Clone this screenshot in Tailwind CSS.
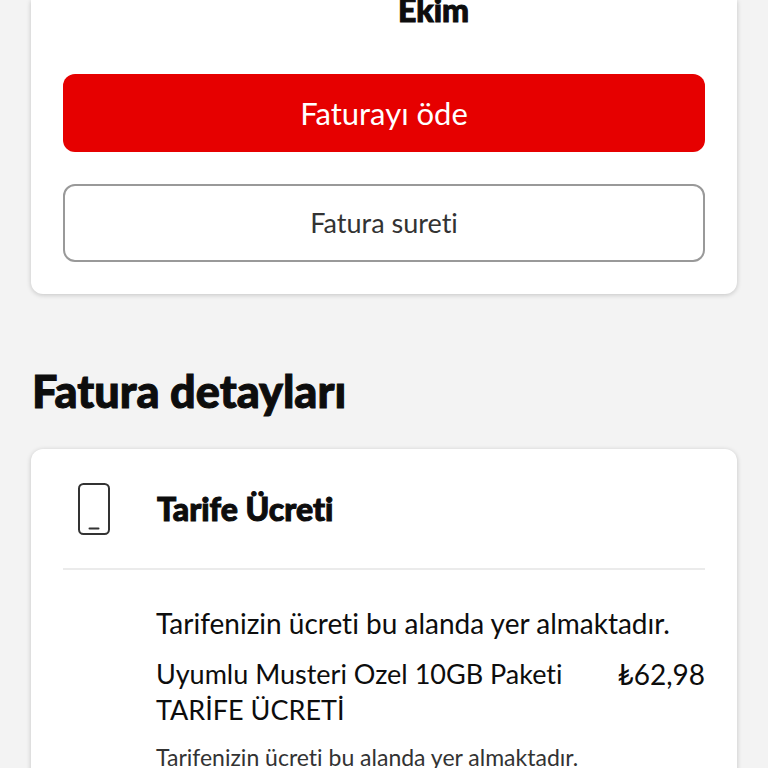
<!DOCTYPE html>
<html lang="tr">
<head>
  <meta charset="UTF-8">
  <meta name="viewport" content="width=device-width, initial-scale=1.0">
  <title>Fatura detayları</title>
  <script src="https://cdn.jsdelivr.net/npm/@tailwindcss/browser@4"></script>
</head>
<body class="h-screen overflow-hidden bg-[#f3f3f3] px-[31px] font-['Lato','Noto_Sans',sans-serif] text-[#0d0d0d] [font-variant-ligatures:none]">

  <!-- Bill summary -->
  <section class="rounded-b-xl bg-white px-8 pb-8 shadow-[0_1px_5px_rgba(0,0,0,0.2)]">
    <div class="grid grid-cols-2 gap-7 pb-[42px]">
      <p class="col-start-2 h-8 text-[32px] leading-5 font-black [-webkit-text-stroke:1px]">Ekim</p>
    </div>
    <div class="flex flex-col gap-8">
      <button type="button" class="h-[78px] w-full rounded-xl bg-[#e60000] text-[31px] text-white">Faturayı öde</button>
      <button type="button" class="h-[78px] w-full rounded-xl border-2 border-[#999999] bg-white text-[27px] text-[#333333]">Fatura sureti</button>
    </div>
  </section>

  <h1 class="mt-[69px] mb-[30px] pl-px text-[45px] leading-14 font-black [-webkit-text-stroke:1px]">Fatura detayları</h1>

  <!-- Tariff fee -->
  <section class="rounded-xl bg-white px-8 pb-8 shadow-[0_1px_5px_rgba(0,0,0,0.2)]">
    <div class="flex h-[121px] items-center border-b-2 border-[#ebebeb] pl-[15px]">
      <svg class="h-[52px] w-8" viewBox="0 0 32 52" fill="none" stroke="#333333" stroke-width="2" stroke-linecap="round">
        <rect x="1" y="1" width="30" height="50" rx="4.5" />
        <path d="M11.5 45.5h9" />
      </svg>
      <h2 class="ml-[47px] text-[32px] font-black [-webkit-text-stroke:1px]">Tarife Ücreti</h2>
    </div>
    <div class="pt-[35px] pl-[93px]">
      <p class="text-[28px] leading-9">Tarifenizin ücreti bu alanda yer almaktadır.</p>
      <div class="mt-[15px] flex justify-between gap-8 leading-9">
        <p class="text-[27px]">Uyumlu Musteri Ozel 10GB Paketi<br>TARİFE ÜCRETİ</p>
        <p class="text-[28px]">₺62,98</p>
      </div>
      <p class="mt-[11px] text-[23px] leading-9 text-[#333333]">Tarifenizin ücreti bu alanda yer almaktadır.</p>
    </div>
  </section>

</body>
</html>
